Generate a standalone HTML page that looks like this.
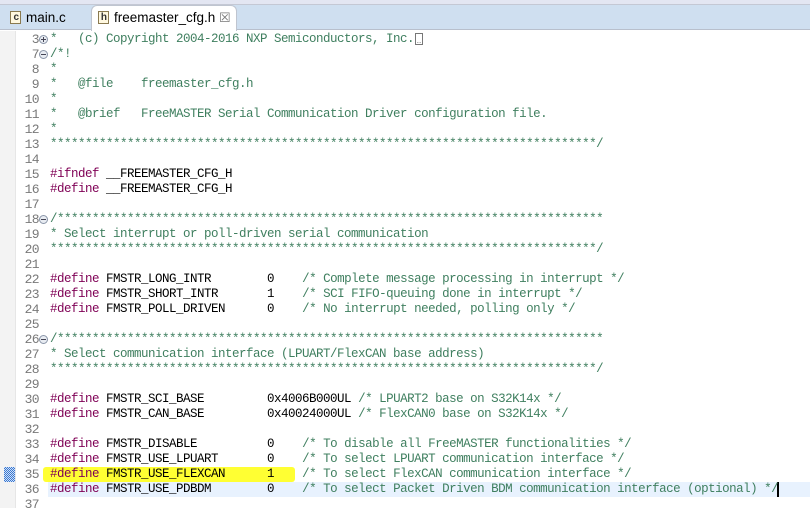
<!DOCTYPE html>
<html><head><meta charset="utf-8"><style>
*{margin:0;padding:0;box-sizing:border-box}
body{width:810px;height:508px;overflow:hidden;background:#fff;position:relative;font-family:"Liberation Sans",sans-serif}
#top{position:absolute;left:0;top:0;width:810px;height:5px;background:#e3e6f2;border-bottom:1px solid #c4c8d4}
#bar{position:absolute;left:0;top:5px;width:810px;height:25px;background:#cfdff0;border-bottom:1px solid #b8bfcc}
.tab{position:absolute;top:5px;height:25px;font-size:13.5px;color:#000;line-height:26px}
#t1{left:0;width:90px}
#t2{left:91px;width:146px;height:26px;background:#fff;border:1px solid #bfc5d0;border-bottom:none;border-radius:6px 6px 0 0}
.ic{position:absolute;top:6px;width:11px;height:13px;border:1px solid #8a7a50;background:#fff8e0;font-size:10px;line-height:11px;font-weight:bold;color:#333;text-align:right;padding-right:1px}
#gut{position:absolute;left:0;top:31px;width:16px;height:477px;background:#f3f3f3;border-right:1px solid #e6e6e6}
.row{position:absolute;left:0;width:810px;height:15px;font-family:"Liberation Mono",monospace;font-size:12.5px;letter-spacing:-0.5px;line-height:15px;white-space:pre}
.n{position:absolute;right:771px;color:#787878;text-align:right;font-size:13px;letter-spacing:-0.6px}
.c{position:absolute;left:50px;color:#000}
.m{color:#3f7f5f}.k{color:#7f0055}
.f{position:absolute;left:39px;top:3px;width:9px;height:9px;border:1px solid #8a95a8;border-radius:50%;background:#e8ecf2}
.f:before{content:"";position:absolute;left:1px;top:3px;width:5px;height:1px;background:#445}
.fp:after{content:"";position:absolute;left:3px;top:1px;width:1px;height:5px;background:#445}
</style></head><body>
<div id="top"></div><div id="bar"></div>
<div class="tab" id="t1"><div class="ic" style="left:10px">c</div><span style="position:absolute;left:26px">main.c</span></div>
<div class="tab" id="t2"><div class="ic" style="left:6px;top:5px">h</div><span style="position:absolute;left:22px;top:-1px">freemaster_cfg.h</span><span style="position:absolute;left:127px;top:-1px;color:#777;font-size:13px">☒</span></div>
<div id="gut"></div>
<div style="position:absolute;left:48px;top:482px;width:762px;height:15px;background:#e8f2fe"></div>
<div style="position:absolute;left:43px;top:467px;width:252px;height:15px;background:#ffff33;border-radius:3px"></div>
<div style="position:absolute;left:4px;top:467px;width:11px;height:15px;background:repeating-conic-gradient(#3a78d0 0 25%,#cfe0f8 0 50%) 0 0/2px 2px"></div>
<div style="position:absolute;left:777px;top:482px;width:2px;height:15px;background:#000"></div>
<div style="position:absolute;left:415px;top:33px;width:8px;height:12px;border:1px solid #777;font-size:8px;line-height:14px;color:#555;text-align:center">..</div>
<div id="code"></div>
<script>
var L=[
["3","p",'<span class="m">*   (c) Copyright 2004-2016 NXP Semiconductors, Inc.</span>'],
["7","m",'<span class="m">/*!</span>'],
["8","",'<span class="m">*</span>'],
["9","",'<span class="m">*   @file    freemaster_cfg.h</span>'],
["10","",'<span class="m">*</span>'],
["11","",'<span class="m">*   @brief   FreeMASTER Serial Communication Driver configuration file.</span>'],
["12","",'<span class="m">*</span>'],
["13","",'<span class="m">'+"*".repeat(78)+'/</span>'],
["14","",''],
["15","",'<span class="k">#ifndef</span> __FREEMASTER_CFG_H'],
["16","",'<span class="k">#define</span> __FREEMASTER_CFG_H'],
["17","",''],
["18","m",'<span class="m">/'+"*".repeat(78)+'</span>'],
["19","",'<span class="m">* Select interrupt or poll-driven serial communication</span>'],
["20","",'<span class="m">'+"*".repeat(78)+'/</span>'],
["21","",''],
["22","",'<span class="k">#define</span> FMSTR_LONG_INTR        0    <span class="m">/* Complete message processing in interrupt */</span>'],
["23","",'<span class="k">#define</span> FMSTR_SHORT_INTR       1    <span class="m">/* SCI FIFO-queuing done in interrupt */</span>'],
["24","",'<span class="k">#define</span> FMSTR_POLL_DRIVEN      0    <span class="m">/* No interrupt needed, polling only */</span>'],
["25","",''],
["26","m",'<span class="m">/'+"*".repeat(78)+'</span>'],
["27","",'<span class="m">* Select communication interface (LPUART/FlexCAN base address)</span>'],
["28","",'<span class="m">'+"*".repeat(78)+'/</span>'],
["29","",''],
["30","",'<span class="k">#define</span> FMSTR_SCI_BASE         0x4006B000UL <span class="m">/* LPUART2 base on S32K14x */</span>'],
["31","",'<span class="k">#define</span> FMSTR_CAN_BASE         0x40024000UL <span class="m">/* FlexCAN0 base on S32K14x */</span>'],
["32","",''],
["33","",'<span class="k">#define</span> FMSTR_DISABLE          0    <span class="m">/* To disable all FreeMASTER functionalities */</span>'],
["34","",'<span class="k">#define</span> FMSTR_USE_LPUART       0    <span class="m">/* To select LPUART communication interface */</span>'],
["35","",'<span class="k">#define</span> FMSTR_USE_FLEXCAN      1    <span class="m">/* To select FlexCAN communication interface */</span>'],
["36","",'<span class="k">#define</span> FMSTR_USE_PDBDM        0    <span class="m">/* To select Packet Driven BDM communication interface (optional) */</span>'],
["37","",'']];
var h='';L.forEach(function(r,i){var t=32+15*i;h+='<div class="row" style="top:'+t+'px"><span class="n">'+r[0]+'</span>'+(r[1]?'<span class="f '+(r[1]=="p"?"fp":"")+'"></span>':'')+'<span class="c">'+r[2]+'</span></div>';});
document.getElementById('code').innerHTML=h;
</script>
</body></html>
